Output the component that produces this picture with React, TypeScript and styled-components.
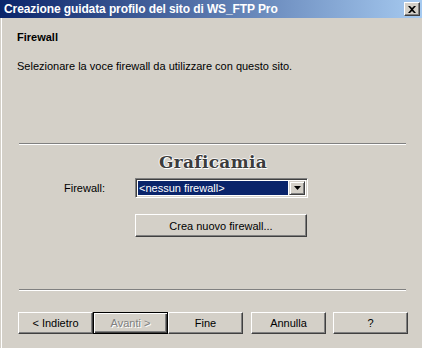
import React from 'react';
import styled, { createGlobalStyle } from 'styled-components';

const GlobalStyle = createGlobalStyle`
  html, body {
    margin: 0;
    padding: 0;
    background: #d4d0c8;
  }
`;

const Window = styled.div`
  width: 422px;
  height: 348px;
  background: #d4d0c8;
  box-shadow: inset 1px 0 #d4d0c8, inset 2px 0 #ffffff;
  font-family: "Liberation Sans", Arial, sans-serif;
  font-size: 11px;
  color: #000;
  display: flex;
  flex-direction: column;
  overflow: hidden;
`;

const TitleBar = styled.div`
  height: 18px;
  display: flex;
  align-items: center;
  justify-content: space-between;
  padding: 0 2px 0 4px;
  background: linear-gradient(to right, #0a246a, #a6caf0);
`;

const TitleText = styled.span`
  color: #fff;
  font-weight: bold;
  font-size: 12px;
  letter-spacing: -0.1px;
`;

const CloseButton = styled.div`
  width: 16px;
  height: 14px;
  box-sizing: border-box;
  background: #d4d0c8;
  border-top: 1px solid #fff;
  border-left: 1px solid #fff;
  border-right: 1px solid #404040;
  border-bottom: 1px solid #404040;
  box-shadow: inset -1px -1px #808080;
  display: flex;
  align-items: center;
  justify-content: center;
`;

const Heading = styled.div`
  font-weight: bold;
  line-height: 13px;
  margin: 13px 0 0 17px;
`;

const Description = styled.div`
  line-height: 13px;
  margin: 16px 0 0 17px;
`;

const Separator = styled.div<{ $top: number }>`
  height: 2px;
  margin: ${p => p.$top}px 16px 0 19px;
  border-top: 1px solid #808080;
  border-bottom: 1px solid #ffffff;
  box-sizing: border-box;
`;

const Watermark = styled.div`
  margin-top: 7px;
  text-align: center;
  padding-left: 4px;
  font-family: "DejaVu Serif", "Liberation Serif", serif;
  font-weight: bold;
  font-size: 17px;
  line-height: 20px;
  color: #3c3c3c;
  letter-spacing: 0.3px;
  text-shadow: 1px 1px 0 #ffffff, -1px 0 0 #f4f4f4, 0 -1px 0 #f4f4f4;
`;

const FieldRow = styled.div`
  display: flex;
  align-items: center;
  margin: 6px 0 0 64px;
  height: 20px;
`;

const FieldLabel = styled.span`
  width: 71px;
`;

const Combo = styled.div`
  width: 173px;
  height: 20px;
  box-sizing: border-box;
  background: #fff;
  border-top: 1px solid #808080;
  border-left: 1px solid #808080;
  border-right: 1px solid #ffffff;
  border-bottom: 1px solid #ffffff;
  box-shadow: inset 1px 1px #404040, inset -1px -1px #d4d0c8;
  padding: 2px;
  display: flex;
`;

const ComboValue = styled.div`
  flex: 1;
  background: #0a246a;
  color: #fff;
  line-height: 14px;
  padding-left: 1px;
  margin: 0 1px 0 0;
`;

const ComboArrow = styled.div`
  width: 16px;
  box-sizing: border-box;
  background: #d4d0c8;
  border-top: 1px solid #d4d0c8;
  border-left: 1px solid #d4d0c8;
  border-right: 1px solid #404040;
  border-bottom: 1px solid #404040;
  box-shadow: inset 1px 1px #ffffff, inset -1px -1px #808080;
  display: flex;
  align-items: center;
  justify-content: center;
`;

const Button = styled.div<{ $width: number; $height: number; $disabled?: boolean; $default?: boolean }>`
  width: ${p => p.$width}px;
  height: ${p => p.$height}px;
  box-sizing: border-box;
  background: #d4d0c8;
  border-top: 1px solid ${p => (p.$default ? '#000' : '#ffffff')};
  border-left: 1px solid ${p => (p.$default ? '#000' : '#ffffff')};
  border-right: 1px solid ${p => (p.$default ? '#000' : '#404040')};
  border-bottom: 1px solid ${p => (p.$default ? '#000' : '#404040')};
  box-shadow: ${p =>
    p.$default
      ? 'inset 1px 1px #ffffff, inset -1px -1px #404040, inset -2px -2px #808080'
      : 'inset -1px -1px #808080'};
  display: flex;
  align-items: center;
  justify-content: center;
  color: ${p => (p.$disabled ? '#808080' : '#000')};
  text-shadow: ${p => (p.$disabled ? '1px 1px 0 #ffffff' : 'none')};
`;

const CreateButtonWrap = styled.div`
  margin: 16px 0 0 135px;
`;

const ButtonRow = styled.div`
  display: flex;
  margin: 21px 0 0 18px;
`;

const ButtonGap = styled.div<{ $w: number }>`
  width: ${p => p.$w}px;
`;

export default function App() {
  return (
    <>
      <GlobalStyle />
      <Window>
        <TitleBar>
          <TitleText>Creazione guidata profilo del sito di WS_FTP Pro</TitleText>
          <CloseButton>
            <svg width="8" height="7" viewBox="0 0 8 7">
              <path d="M0 0h2l2 2 2-2h2L5 3.5 8 7H6L4 5 2 7H0l3-3.5z" fill="#000" />
            </svg>
          </CloseButton>
        </TitleBar>

        <Heading>Firewall</Heading>
        <Description>Selezionare la voce firewall da utilizzare con questo sito.</Description>

        <Separator $top={70} />

        <Watermark>Graficamia</Watermark>

        <FieldRow>
          <FieldLabel>Firewall:</FieldLabel>
          <Combo>
            <ComboValue>&lt;nessun firewall&gt;</ComboValue>
            <ComboArrow>
              <svg width="7" height="4" viewBox="0 0 7 4">
                <path d="M0 0h7L3.5 4z" fill="#000" />
              </svg>
            </ComboArrow>
          </Combo>
        </FieldRow>

        <CreateButtonWrap>
          <Button $width={172} $height={23}>Crea nuovo firewall...</Button>
        </CreateButtonWrap>

        <Separator $top={52} />

        <ButtonRow>
          <Button $width={75} $height={22}>&lt; Indietro</Button>
          <Button $width={75} $height={22} $disabled $default>Avanti &gt;</Button>
          <Button $width={75} $height={22}>Fine</Button>
          <ButtonGap $w={8} />
          <Button $width={75} $height={22}>Annulla</Button>
          <ButtonGap $w={7} />
          <Button $width={75} $height={22}>?</Button>
        </ButtonRow>
      </Window>
    </>
  );
}
